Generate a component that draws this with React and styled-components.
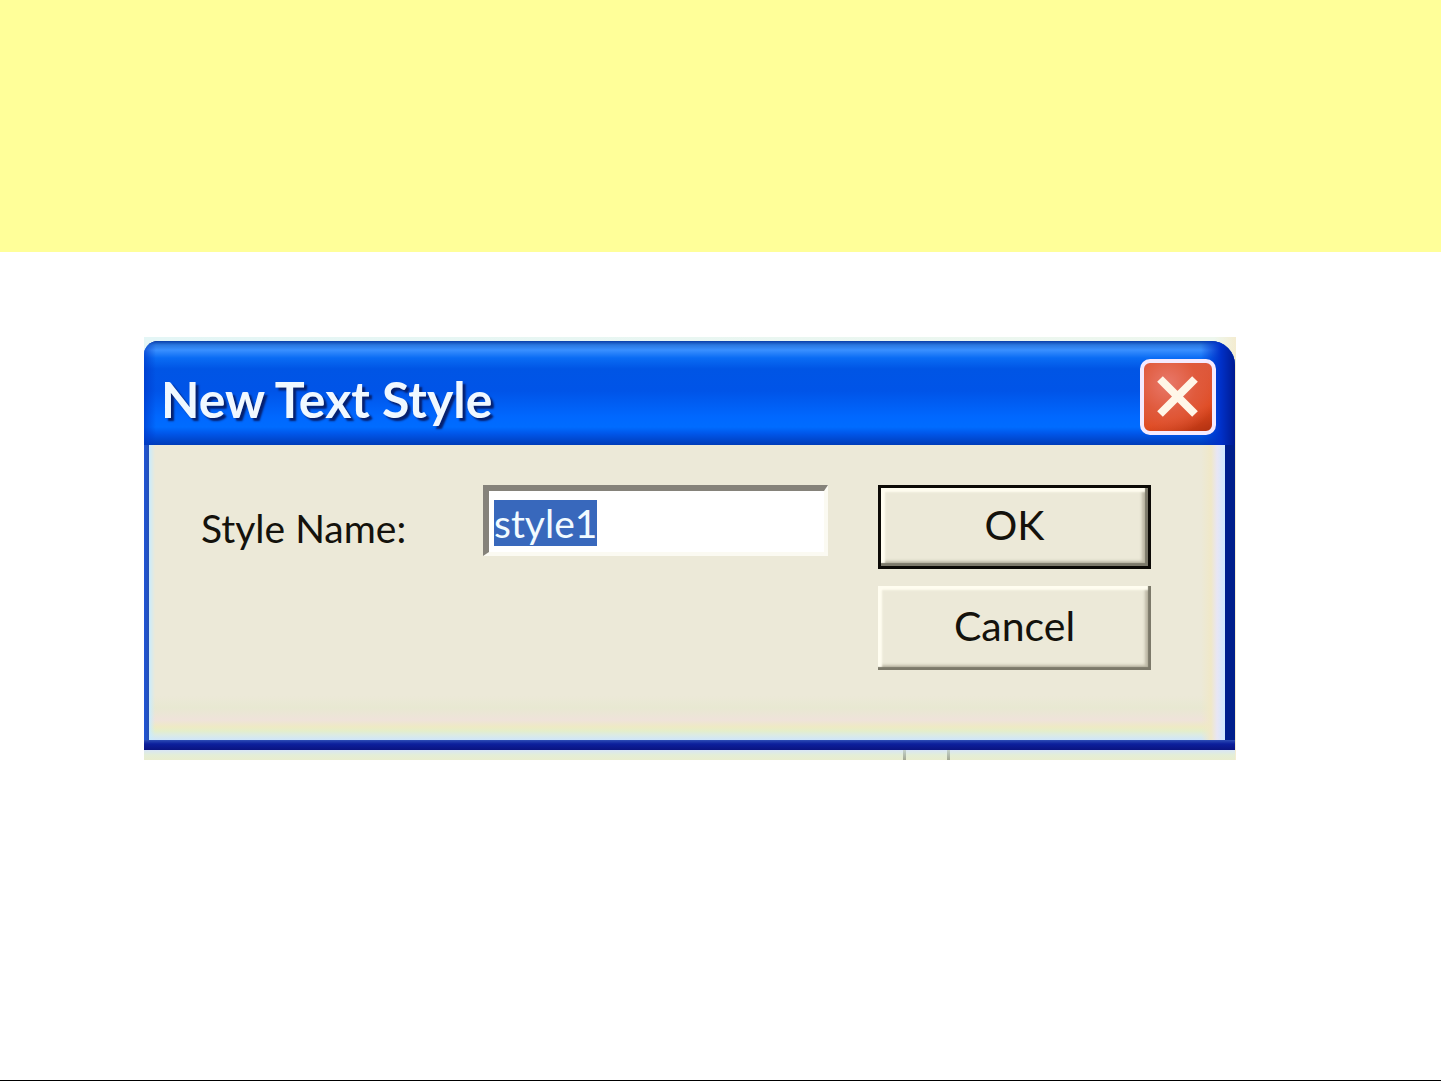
import React, { useEffect, useRef } from "react";
import styled, { createGlobalStyle, css } from "styled-components";

const GlobalStyle = createGlobalStyle`
  * { box-sizing: border-box; }
  body {
    margin: 0;
    background: #ffffff;
    font-family: Lato, "Liberation Sans", Arial, sans-serif;
  }
`;

const Slide = styled.div`
  display: flex;
  flex-direction: column;
  min-height: 100vh;
  border-bottom: 1px solid #000000;
`;

const Banner = styled.header`
  height: 252px;
  background: #ffff99;
`;

const Stage = styled.main`
  flex: 1;
  padding: 85px 205px 40px 144px;
`;

const Backdrop = styled.div`
  padding: 4px 1px 0 0;
  background: linear-gradient(90deg, #e4f6f6 0, #eef7ee 98%, #f4ecd0 100%);
`;

const Dialog = styled.form`
  overflow: hidden;
  border-radius: 14px 24px 0 0;
  background: linear-gradient(0deg, #0a1480 0, #0c1f9c 6px, #2c4cb4 10px, transparent 10px),
    linear-gradient(90deg, #1f55d8 0, #2450b4 5px, #001f8c 5px);
  padding-bottom: 10px;
`;

const TitleBar = styled.div`
  display: flex;
  align-items: center;
  justify-content: space-between;
  height: 104px;
  padding: 8px 19px 0 17px;
  background:
    linear-gradient(90deg, #0038c8aa 0, transparent 12px),
    linear-gradient(270deg, #001a90 0, #0030c8 14px, transparent 34px),
    linear-gradient(180deg, #0a3fa8 0, #2a78e0 4px, #3a90ff 9px, #0a6cf4 17px, #0055e5 28px, #0054e8 50px, #0068ff 76px, #006cff 86px, #0055e8 93px, #003cb8 104px);
`;

const Title = styled.h1`
  margin: 0;
  padding-top: 4px;
  font-size: 50px;
  line-height: 56px;
  font-weight: 700;
  color: #f0f8ff;
  text-shadow: 3px 3px 2px #06206e;
`;

const CloseButton = styled.button`
  display: grid;
  place-items: center;
  width: 76px;
  height: 76px;
  padding: 0;
  border: 4px solid #f4eaff;
  border-radius: 10px;
  color: #fff6e8;
  background:
    radial-gradient(circle at 35% 30%, #e8786a 0, #e05a3c 45%, transparent 80%),
    linear-gradient(160deg, #d8604c 0, #e04a20 70%, #b03010 100%);
`;

const Body = styled.div`
  display: grid;
  grid-template-columns: 232px 1fr 273px;
  column-gap: 50px;
  align-items: start;
  margin: 0 10px 0 5px;
  padding: 40px 74px 70px 52px;
  background:
    linear-gradient(90deg, #c8ecff 0, transparent 6px),
    linear-gradient(270deg, #cfe8ff 0, #e8e6f4 8px, #f0e8c8 14px, transparent 24px),
    linear-gradient(0deg, #cfe6fa 0, #dcebe4 5px, #e4eecb 9px, #eeeac4 13px, #efe3da 20px, #e8e8d2 32px, transparent 44px),
    #ece9d8;
`;

const Label = styled.label`
  padding-top: 18px;
  font-size: 39px;
  line-height: 50px;
  white-space: nowrap;
  color: #14120c;
`;

const Field = styled.input`
  width: 100%;
  height: 71px;
  padding: 2px 5px 0;
  border: 6px solid;
  border-color: #85827a #fbfaf2 #fbfaf2 #85827a;
  border-width: 6px 4px 4px 6px;
  border-radius: 0;
  outline: none;
  font-family: inherit;
  font-size: 39px;
  line-height: 50px;
  color: #14120c;
  background: #ffffff;
  caret-color: transparent;

  &::selection {
    color: #f2fbff;
    background: #3868bc;
  }
`;

const Actions = styled.div`
  display: flex;
  flex-direction: column;
  gap: 17px;
`;

const ActionButton = styled.button`
  height: 84px;
  padding: 0 0 4px;
  border: 0 solid #0c0a06;
  border-radius: 0;
  font-family: inherit;
  font-size: 41px;
  line-height: 50px;
  color: #14120c;
  background: #ece9d8;
  box-shadow:
    inset -3px -3px 1px #7c796a,
    inset 4px 4px 2px #fffdf0,
    inset -6px -5px 3px #bdb9a6;

  ${({ $primary }) =>
    $primary &&
    css`
      border-width: 3px;
    `}
`;

/* Edge of the window underneath, with its two column dividers */
const Underlay = styled.div`
  display: flex;
  justify-content: flex-end;
  gap: 41px;
  height: 10px;
  padding-right: 285px;
  background: linear-gradient(180deg, #d8e6f6 0, #e4eed8 5px, #e9edcf 10px);
`;

const Divider = styled.span`
  width: 3px;
  background: linear-gradient(180deg, #c4d2cc, #a3a892);
`;

function CloseIcon() {
  return (
    <svg width="44" height="44" viewBox="0 0 44 44" aria-hidden="true">
      <path d="M4 4 L39 39 M39 4 L4 39" fill="none" stroke="currentColor" strokeWidth="8" />
    </svg>
  );
}

export default function App() {
  const field = useRef(null);

  useEffect(() => {
    field.current.focus();
    field.current.select();
  }, []);

  return (
    <>
      <GlobalStyle />
      <Slide>
        <Banner />
        <Stage>
          <Backdrop>
            <Dialog onSubmit={(event) => event.preventDefault()}>
              <TitleBar>
                <Title>New Text Style</Title>
                <CloseButton type="button" aria-label="Close">
                  <CloseIcon />
                </CloseButton>
              </TitleBar>
              <Body>
                <Label htmlFor="style-name">Style Name:</Label>
                <Field id="style-name" type="text" defaultValue="style1" spellCheck={false} ref={field} />
                <Actions>
                  <ActionButton type="submit" $primary>OK</ActionButton>
                  <ActionButton type="button">Cancel</ActionButton>
                </Actions>
              </Body>
            </Dialog>
            <Underlay>
              <Divider />
              <Divider />
            </Underlay>
          </Backdrop>
        </Stage>
      </Slide>
    </>
  );
}
